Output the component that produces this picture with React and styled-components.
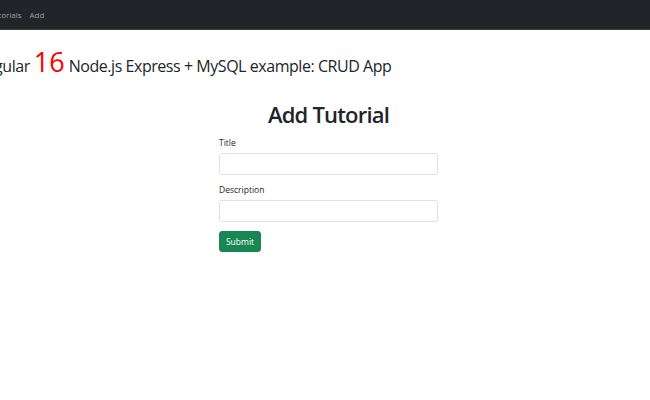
import React from "react";
import styled, { createGlobalStyle } from "styled-components";

const Global = createGlobalStyle`
  html, body { margin: 0; padding: 0; background: #fff; }
  body { font-family: "Open Sans", "Noto Sans", sans-serif; color: #212529; overflow: hidden; }
  * { box-sizing: border-box; }
`;

const Page = styled.div`
  width: 650px;
  height: 400px;
  overflow: hidden;
`;

const Navbar = styled.nav`
  height: 30px;
  background: #212529;
  border-bottom: 1px solid #3a3f44;
  display: flex;
  align-items: center;
  gap: 8px;
  margin-left: -11px;
`;

const NavLink = styled.a`
  font-size: 8px;
  color: rgba(255, 255, 255, 0.55);
  text-decoration: none;
`;

const Heading = styled.h4`
  margin: 17px 0 0 -25px;
  font-size: 16px;
  letter-spacing: -0.45px;
  font-weight: 400;
  line-height: 30px;
  white-space: nowrap;
  display: flex;
  align-items: baseline;
  gap: 4px;
`;

const Version = styled.span`
  color: #ff0000;
  font-size: 27px;
  letter-spacing: 0;
  line-height: 30px;
`;

const Form = styled.div`
  width: 219px;
  margin: 18px 0 0 219px;
  display: flex;
  flex-direction: column;
`;

const FormTitle = styled.h2`
  margin: 0 0 8px;
  text-align: center;
  font-size: 22px;
  letter-spacing: -0.8px;
  font-weight: 600;
  line-height: 30px;
`;

const Group = styled.div`
  display: flex;
  flex-direction: column;
  margin-bottom: 9px;
`;

const Label = styled.label`
  font-size: 8.5px;
  line-height: 12px;
  margin-bottom: 4px;
  color: #212529;
`;

const Input = styled.input`
  height: 22px;
  width: 100%;
  border: 1px solid #dee2e6;
  border-radius: 3px;
  padding: 0 6px;
  font-size: 9px;
  outline: none;
`;

const Button = styled.button`
  align-self: flex-start;
  height: 21px;
  width: 42px;
  background: #198754;
  color: #fff;
  border: 1px solid #198754;
  border-radius: 3px;
  font-family: inherit;
  font-size: 8.5px;
  padding: 0;
`;

export default function App() {
  return (
    <Page>
      <Global />
      <Navbar>
        <NavLink href="#">Tutorials</NavLink>
        <NavLink href="#">Add</NavLink>
      </Navbar>
      <Heading>
        Angular <Version>16</Version> Node.js Express + MySQL example: CRUD App
      </Heading>
      <Form>
        <FormTitle>Add Tutorial</FormTitle>
        <Group>
          <Label>Title</Label>
          <Input />
        </Group>
        <Group>
          <Label>Description</Label>
          <Input />
        </Group>
        <Button>Submit</Button>
      </Form>
    </Page>
  );
}
